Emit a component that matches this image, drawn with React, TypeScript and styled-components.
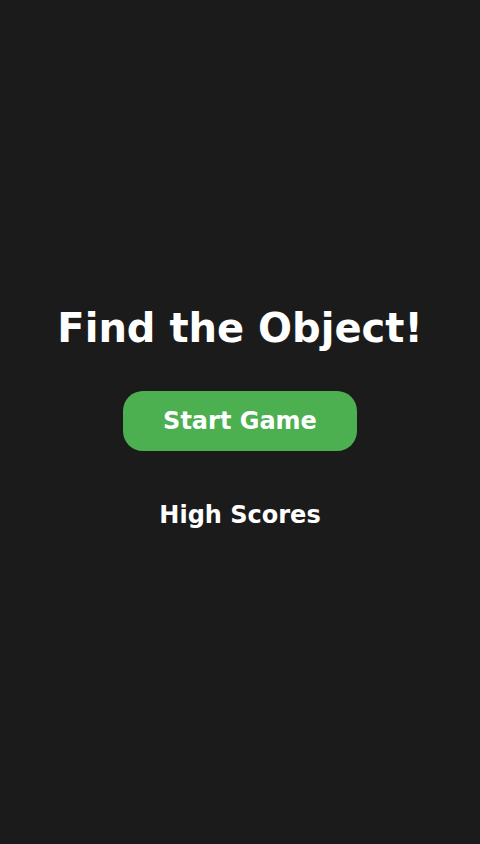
import React from "react";
import styled, { createGlobalStyle } from "styled-components";

const GlobalStyle = createGlobalStyle`
  html, body {
    margin: 0;
    padding: 0;
    background: #1b1b1b;
  }
  #root {
    min-height: 100vh;
  }
`;

const Screen = styled.div`
  min-height: 100vh;
  display: flex;
  flex-direction: column;
  align-items: center;
  justify-content: center;
  background: #1b1b1b;
  color: #ffffff;
  font-family: "DejaVu Sans", sans-serif;
`;

const Title = styled.h1`
  margin: 0 0 40px;
  font-size: 40px;
  font-weight: bold;
  text-align: center;
`;

const PrimaryButton = styled.button`
  font-family: "DejaVu Sans", sans-serif;
  font-size: 24px;
  font-weight: bold;
  color: #ffffff;
  background: #4caf50;
  border: none;
  border-radius: 20px;
  width: 234px;
  height: 60px;
  padding: 0;
  cursor: pointer;
`;

const LinkButton = styled.button`
  font-family: "DejaVu Sans", sans-serif;
  font-size: 24px;
  font-weight: bold;
  color: #ffffff;
  background: transparent;
  border: none;
  margin-top: 40px;
  padding: 10px 20px;
  cursor: pointer;
`;

export default function App() {
  return (
    <>
      <GlobalStyle />
      <Screen>
        <Title>Find the Object!</Title>
        <PrimaryButton>Start Game</PrimaryButton>
        <LinkButton>High Scores</LinkButton>
      </Screen>
    </>
  );
}
